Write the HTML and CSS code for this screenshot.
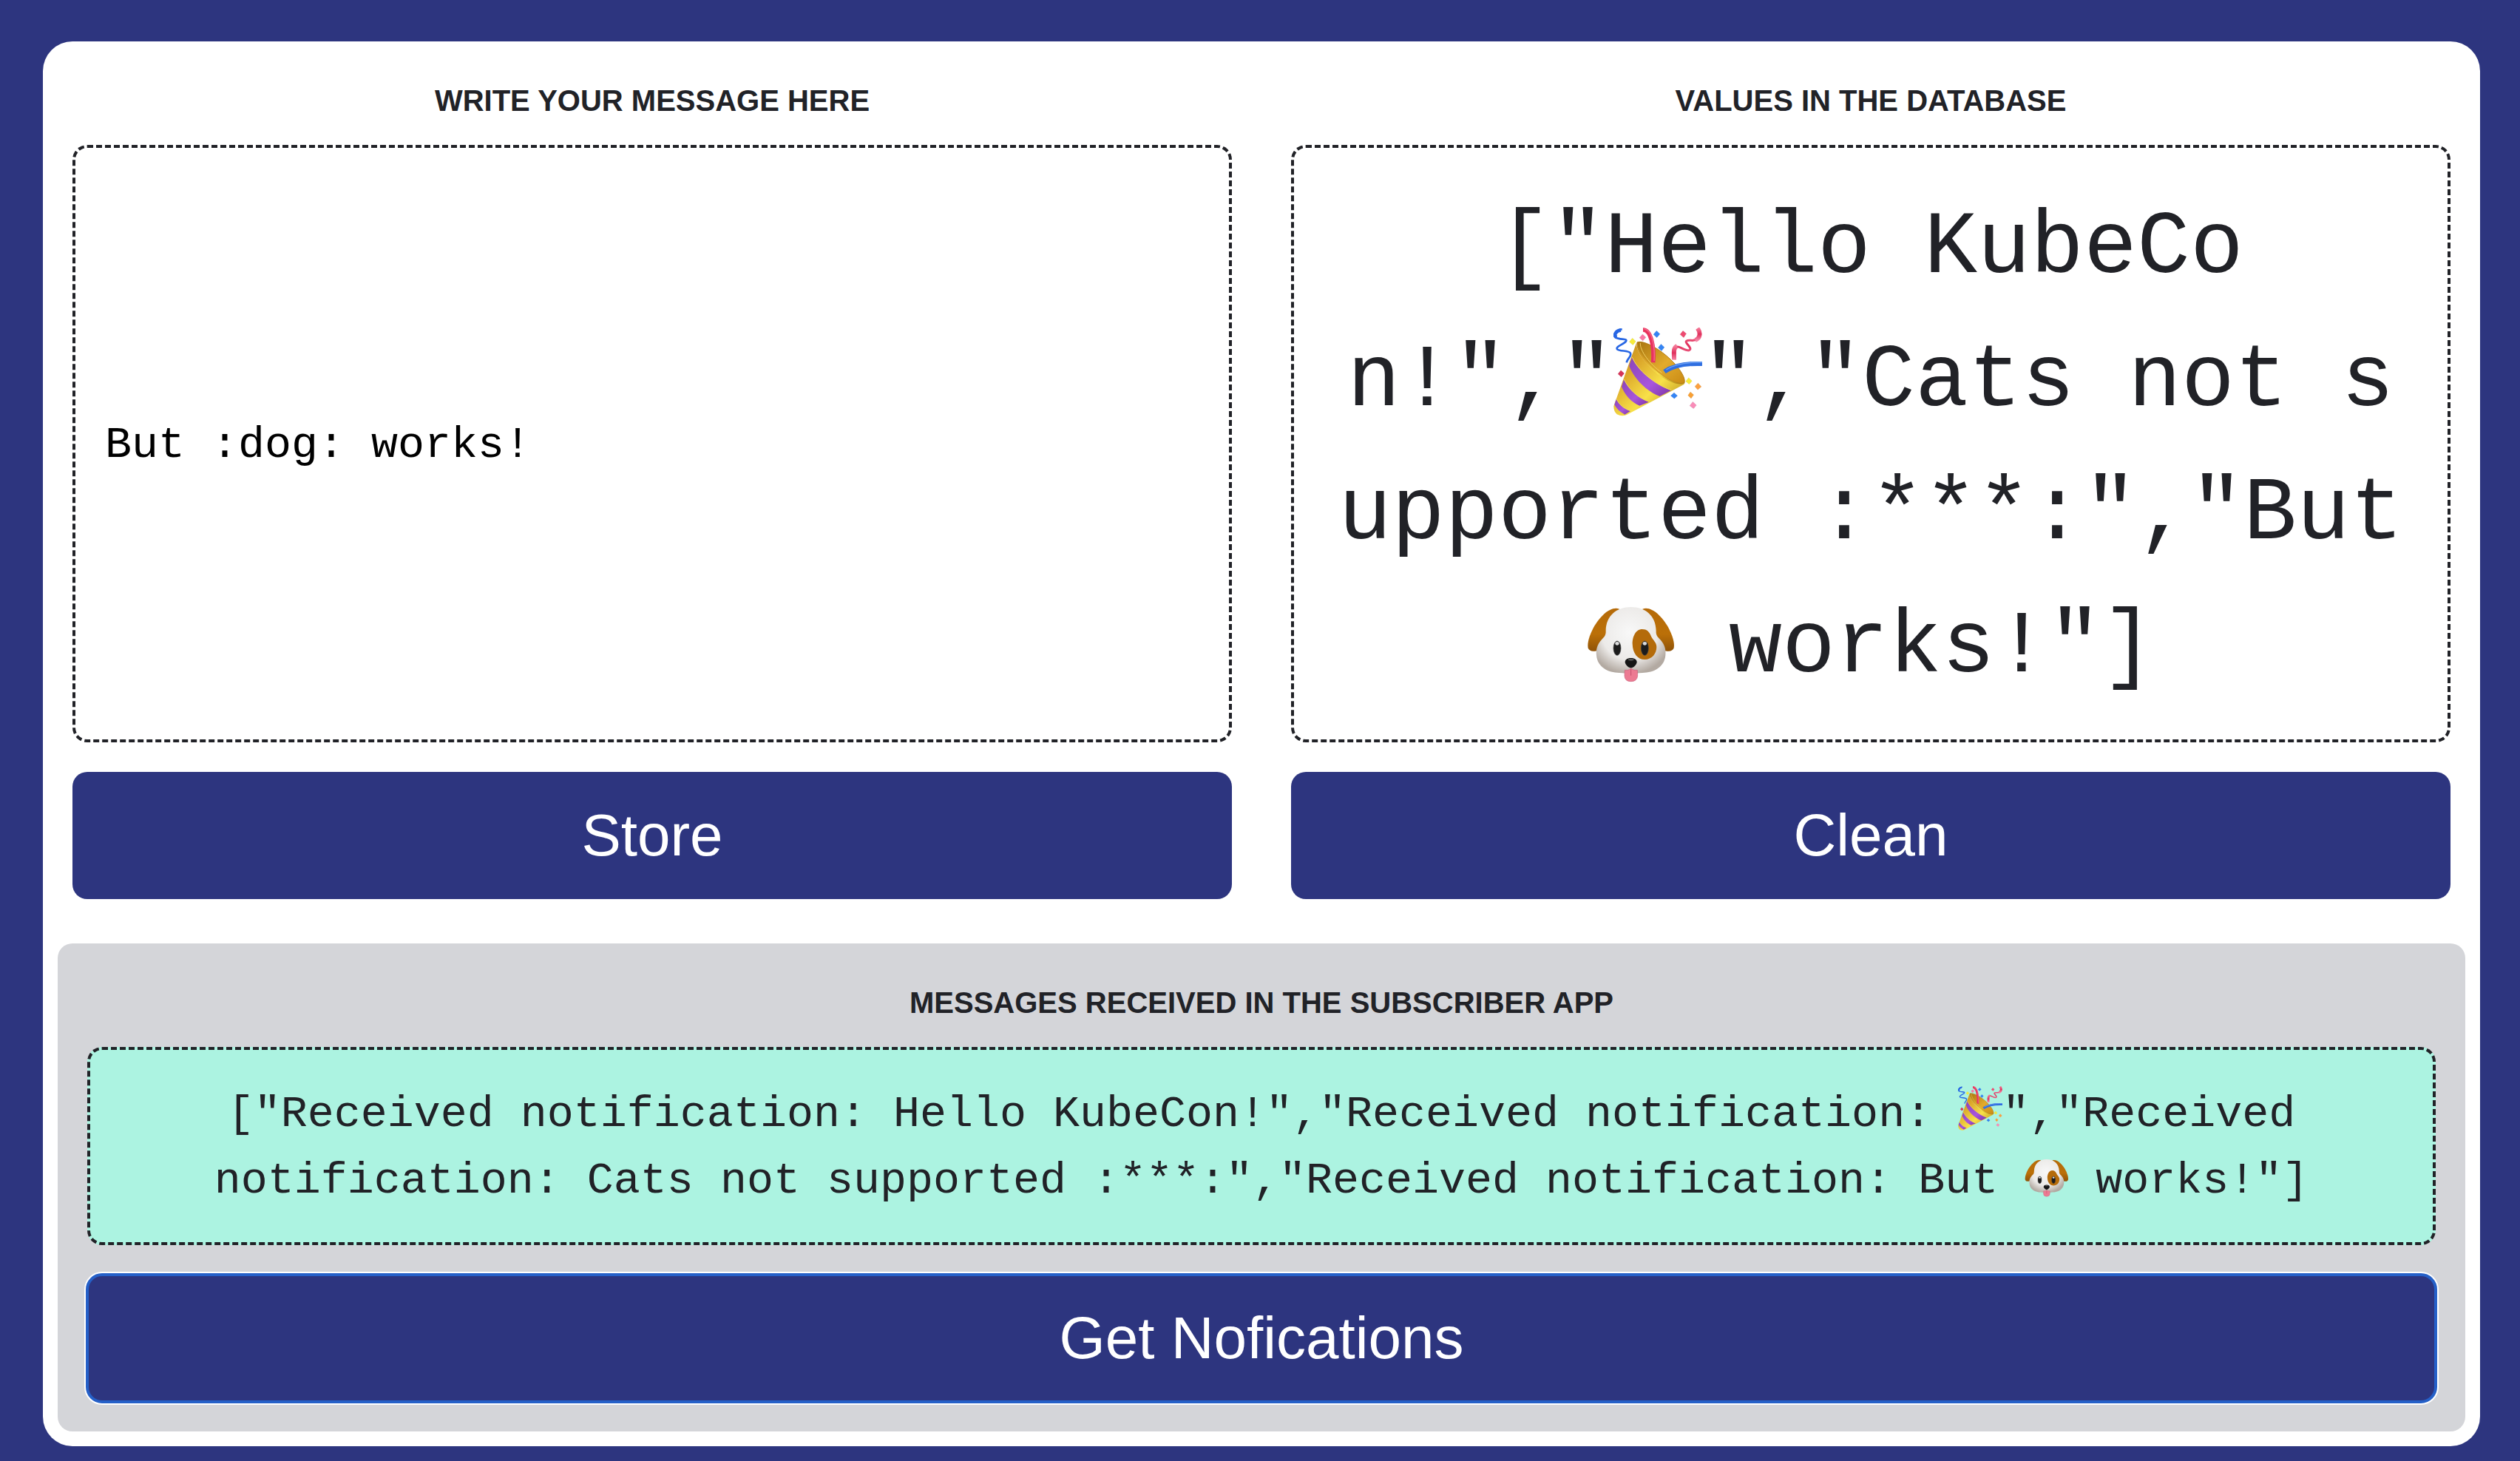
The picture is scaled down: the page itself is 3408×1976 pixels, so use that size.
FILE: index.html
```html
<!DOCTYPE html>
<html lang="en">
<head>
<meta charset="utf-8">
<meta name="viewport" content="width=device-width, initial-scale=1">
<title>Messages</title>
<link rel="stylesheet" href="styles.css">
</head>
<body>
<svg class="sprites" aria-hidden="true">
  <defs>
    <linearGradient id="gold" x1="0" y1="0" x2="1" y2="1">
      <stop offset="0" stop-color="#b98412"/>
      <stop offset=".3" stop-color="#dba62a"/>
      <stop offset=".6" stop-color="#f8e148"/>
      <stop offset="1" stop-color="#a8780f"/>
    </linearGradient>
    <linearGradient id="inside" x1="0" y1="0" x2="1" y2="1">
      <stop offset="0" stop-color="#a8750f"/>
      <stop offset=".55" stop-color="#e2ab2c"/>
      <stop offset="1" stop-color="#c98a14"/>
    </linearGradient>
    <linearGradient id="purple" x1="0" y1="0" x2="1" y2="1">
      <stop offset="0" stop-color="#8a45b8"/>
      <stop offset=".6" stop-color="#a855dc"/>
      <stop offset="1" stop-color="#7d35a5"/>
    </linearGradient>
    <linearGradient id="pink" x1="0" y1="0" x2="0" y2="1">
      <stop offset="0" stop-color="#f47a98"/>
      <stop offset=".5" stop-color="#e0305c"/>
      <stop offset="1" stop-color="#f585a5"/>
    </linearGradient>
    <radialGradient id="fur" cx=".48" cy=".38" r=".62">
      <stop offset="0" stop-color="#f8f8f8"/>
      <stop offset=".65" stop-color="#eceae8"/>
      <stop offset="1" stop-color="#b3aaa2"/>
    </radialGradient>
    <linearGradient id="ear" x1="0" y1="0" x2="0" y2="1">
      <stop offset="0" stop-color="#b56a08"/>
      <stop offset=".6" stop-color="#bb7008"/>
      <stop offset="1" stop-color="#8f5207"/>
    </linearGradient>
  </defs>

  <symbol id="party" viewBox="96 73 360 360">
    <path fill="url(#gold)" d="M190 133 C184 176 245 245 300 276 C340 297 374 306 386 294 Q386 302 376 307 L150 427 Q130 436 110 425 Q97 414 97 392 Z"/>
    <g fill="url(#purple)">
      <path d="M171 194 C190 242 258 302 330 328 L284 352 C232 333 178 280 160 228 Z"/>
      <path d="M138 284 C156 320 192 358 240 375 L202 390 C168 376 142 346 129 313 Z"/>
      <path d="M107 364 C120 386 138 402 165 412 L142 426 C122 416 108 402 100 386 Z"/>
    </g>
    <g fill="none" stroke="#f3d75c" stroke-width="3">
      <path d="M172 193 C192 242 258 302 331 327"/>
      <path d="M139 283 C156 320 192 358 241 374"/>
      <path d="M108 363 C120 386 138 402 166 411"/>
    </g>
    <path fill="url(#inside)" stroke="#b37b12" stroke-width="3" d="M192 133 C212 124 262 148 303 181 C352 220 390 272 384 296 C372 307 330 294 288 263 C238 226 190 168 192 133Z"/>
    <path fill="url(#gold)" d="M192 135 C196 172 240 226 288 263 C326 291 364 304 384 297 C368 312 318 294 276 262 C228 226 184 168 192 135Z"/>
    <path fill="none" stroke="#f0d060" stroke-width="3" d="M205 136 C203 168 245 223 292 256"/>
    <path fill="none" stroke="#e8345e" stroke-width="17" d="M216 82 C248 82 262 150 257 215"/>
    <path fill="none" stroke="#f7688a" stroke-width="4" d="M220 78 C254 84 265 150 261 208"/>
    <path fill="none" stroke="#2f6ee0" stroke-width="18" d="M303 252 C340 226 400 218 456 220"/>
    <path fill="none" stroke="#6da2f5" stroke-width="4" d="M310 244 C345 220 400 213 456 214"/>
    <path fill="none" stroke="#2766e4" stroke-width="8" d="M131 80 C110 81 92 104 108 115 C124 123 157 116 146 130 C134 143 104 150 111 161 C121 171 158 164 165 177 C170 190 154 196 149 215"/>
    <path fill="none" stroke="#2766e4" stroke-width="14" d="M126 83 C106 86 95 104 108 113"/>
    <path fill="none" stroke="url(#pink)" stroke-width="9" d="M443 88 C452 119 428 127 410 125 C392 124 386 128 394 138 C406 152 414 162 401 166 C380 166 362 144 347 152 C336 162 341 182 343 203"/>
    <path fill="none" stroke="url(#pink)" stroke-width="18" d="M437 76 C451 94 448 117 428 124"/>
    <path fill="none" stroke="url(#pink)" stroke-width="18" d="M354 148 C336 156 343 180 342 204"/>
    <g stroke-width="1" stroke="#8886">
      <path fill="#fa78a4" d="M214 100l14 13-13 14-14-13z"/>
      <path fill="#f7ec3a" d="M173 116l14 13-12 15-15-13z"/>
      <path fill="#3484f4" d="M271 86l14 13-13 15-14-13z"/>
      <path fill="#3484f4" d="M289 140l14 13-12 15-14-13z"/>
      <path fill="#ee4a70" d="M378 86l14 12-11 16-15-13z"/>
      <path fill="#d63458" d="M126 246l14 13-12 15-14-13z"/>
      <path fill="#3484f4" d="M342 337l14 13-13 12-15-12z"/>
      <path fill="#f7ec3a" d="M401 276l14 14-12 13-14-12z"/>
      <path fill="#fba040" d="M439 298l14 15-15 13-12-14z"/>
      <path fill="#f8a034" d="M408 334l14 12-11 15-13-13z"/>
      <path fill="#f98cb8" d="M418 374l15 14-12 14-16-12z"/>
    </g>
  </symbol>

  <symbol id="dog" viewBox="78 12 360 360">
    <path fill="url(#ear)" d="M210 74 C176 60 132 102 106 148 C88 182 79 212 83 232 Q88 247 110 245 L160 236 L200 110Z"/>
    <path fill="url(#ear)" d="M304 74 C338 60 382 102 408 148 C426 182 435 212 431 232 Q426 247 404 245 L354 236 L314 110Z"/>
    <path fill="url(#fur)" d="M257 66 C198 66 156 102 155 162 C156 181 149 187 139 197 C118 220 115 240 117 262 C121 310 164 333 210 333 C228 333 242 338 257 338 C272 338 286 333 304 333 C350 333 393 310 397 262 C399 240 396 220 375 197 C365 187 358 181 359 162 C358 102 316 66 257 66Z"/>
    <path fill="#b46b0a" d="M303 156 C275 156 263 188 263 215 C264 255 285 279 313 279 C342 279 361 255 361 228 C361 208 346 201 339 185 C331 165 321 156 303 156Z"/>
    <g fill="#1c1c1c" stroke="#444" stroke-width="2">
      <ellipse cx="201" cy="233" rx="15" ry="29"/>
      <ellipse cx="313" cy="233" rx="15" ry="29"/>
    </g>
    <g fill="#ddd">
      <ellipse cx="201" cy="214" rx="8" ry="7"/>
      <ellipse cx="313" cy="214" rx="8" ry="7"/>
    </g>
    <path fill="#ec7a92" stroke="#c9607a" stroke-width="2" d="M232 322 Q247 325 257 315 Q269 325 283 322 L284 345 Q282 368 257 368 Q232 368 231 345Z"/>
    <path fill="none" stroke="#c2506c" stroke-width="3" d="M257 318V344"/>
    <path fill="#151515" d="M257 273 C240 273 233 281 233 290 C235 303 250 313 257 313 C264 313 279 303 281 290 C281 281 274 273 257 273Z"/>
    <ellipse fill="#555" cx="257" cy="280" rx="12" ry="4"/>
  </symbol>
</svg>

<main class="card">
  <div class="columns">
    <section class="column">
      <h2 class="title"><label for="message">WRITE YOUR MESSAGE HERE</label></h2>
      <input class="box message" id="message" type="text" value="But :dog: works!">
      <button class="button" type="button">Store</button>
    </section>
    <section class="column">
      <h2 class="title">VALUES IN THE DATABASE</h2>
      <div class="box values">["Hello KubeCo<br>n!","<svg class="emoji" role="img" aria-label="party popper"><use href="#party"/></svg>","Cats not s<br>upported :***:","But<br><svg class="emoji" role="img" aria-label="dog face"><use href="#dog"/></svg> works!"]</div>
      <button class="button" type="button">Clean</button>
    </section>
  </div>
  <section class="column subscriber">
    <h2 class="title">MESSAGES RECEIVED IN THE SUBSCRIBER APP</h2>
    <div class="box received">["Received notification: Hello KubeCon!","Received notification: <svg class="emoji" role="img" aria-label="party popper"><use href="#party"/></svg>","Received notification: Cats not supported :***:","Received notification: But <svg class="emoji" role="img" aria-label="dog face"><use href="#dog"/></svg> works!"]</div>
    <button class="button focused" type="button">Get Nofications</button>
  </section>
</main>
</body>
</html>
```
FILE: styles.css
```css
* {
  box-sizing: border-box;
}

body {
  margin: 0;
  padding: 56px 54px 20px 58px;
  background: #2d357f;
  color: #212227;
  font-family: "Liberation Sans", Arial, sans-serif;
}

.sprites {
  position: absolute;
  width: 0;
  height: 0;
}

.card {
  padding: 0 20px 20px;
  background: #fff;
  border-radius: 40px;
}

.columns {
  display: flex;
  gap: 80px;
  padding: 0 20px 60px;
}

.column {
  display: flex;
  flex: 1;
  flex-direction: column;
  min-width: 0;
  padding-top: 50px;
}

.title {
  margin: 0 0 30px;
  font-size: 40px;
  line-height: 60px;
  text-align: center;
}

.box {
  margin: 0 0 40px;
  padding: 42px 40px 38px;
  border: 4px dashed #212227;
  border-radius: 20px;
  font-family: "Liberation Mono", "Courier New", monospace;
  font-size: 60px;
  line-height: 90px;
  text-align: center;
}

.message {
  flex: 1;
  width: 100%;
  background: #fff;
  color: #000;
  text-align: left;
}

.values {
  padding: 46px 40px 34px;
  font-size: 120px;
  line-height: 180px;
}

.received {
  background: #acf3e1;
}

.emoji {
  width: 1em;
  height: 1em;
  vertical-align: -6px;
}

.values .emoji {
  vertical-align: -15px;
}

.button {
  width: 100%;
  padding: 36px 40px;
  border: 0;
  border-radius: 20px;
  background: #2d357f;
  color: #fff;
  font-family: inherit;
  font-size: 80px;
  line-height: 100px;
}

.subscriber {
  padding: 50px 40px 40px;
  background: #d4d5d9;
  border-radius: 20px;
}

.focused {
  outline: 4px solid #2560c8;
  outline-offset: -2px;
  box-shadow: 0 0 0 4px #fff;
}
```
